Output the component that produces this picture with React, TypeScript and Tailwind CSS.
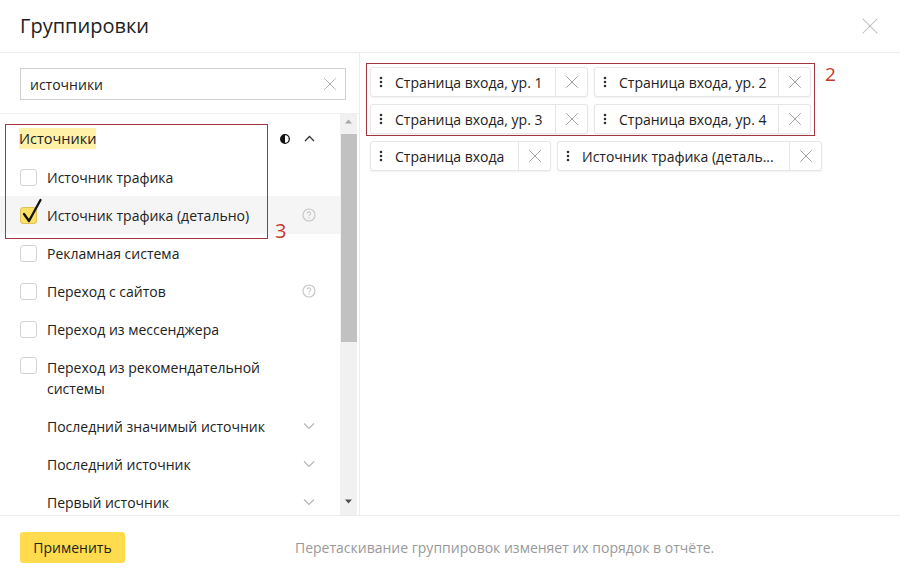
import { X } from "lucide-react";

type Row =
  | { kind: "check"; label: string; checked?: boolean; hint?: boolean; hover?: boolean; twoLine?: boolean }
  | { kind: "sub"; label: string };

const rows: Row[] = [
  { kind: "check", label: "Источник трафика" },
  { kind: "check", label: "Источник трафика (детально)", checked: true, hint: true, hover: true },
  { kind: "check", label: "Рекламная система" },
  { kind: "check", label: "Переход с сайтов", hint: true },
  { kind: "check", label: "Переход из мессенджера" },
  { kind: "check", label: "Переход из рекомендательной системы", twoLine: true },
  { kind: "sub", label: "Последний значимый источник" },
  { kind: "sub", label: "Последний источник" },
  { kind: "sub", label: "Первый источник" },
];

const chips = [
  { label: "Страница входа, ур. 1", w: "w-[218px]" },
  { label: "Страница входа, ур. 2", w: "w-[217px]" },
  { label: "Страница входа, ур. 3", w: "w-[218px]" },
  { label: "Страница входа, ур. 4", w: "w-[217px]" },
  { label: "Страница входа", w: "w-[181px]" },
  { label: "Источник трафика (деталь...", w: "w-[265px]" },
];

function HintIcon() {
  return (
    <svg width="14" height="14" viewBox="0 0 14 14" className="text-[#c8c8c8]">
      <circle cx="7" cy="7" r="6" fill="none" stroke="currentColor" strokeWidth="1.2" />
      <path d="M5.3 5.6a1.7 1.7 0 1 1 2.4 1.5c-.5.3-.7.6-.7 1.1" fill="none" stroke="currentColor" strokeWidth="1.1" />
      <circle cx="7" cy="10" r=".7" fill="currentColor" />
    </svg>
  );
}

function ChevronDown() {
  return (
    <svg width="12" height="8" viewBox="0 0 12 8" className="text-[#b5b5b5]">
      <path d="M1 1.5l5 5 5-5" fill="none" stroke="currentColor" strokeWidth="1.2" />
    </svg>
  );
}

function DragDots() {
  return (
    <svg width="4" height="12" viewBox="0 0 4 12" className="shrink-0 text-[#333]">
      <circle cx="2" cy="2" r="1.3" fill="currentColor" />
      <circle cx="2" cy="6" r="1.3" fill="currentColor" />
      <circle cx="2" cy="10" r="1.3" fill="currentColor" />
    </svg>
  );
}

function Checkbox({ checked }: { checked?: boolean }) {
  if (!checked) return <span className="h-[17px] w-[17px] shrink-0 rounded-[3px] border border-[#d3d3d3] bg-white" />;
  return (
    <span className="relative h-[17px] w-[17px] shrink-0 rounded-[3px] border border-[#e0c25a] bg-[#ffe066]">
      <svg width="22" height="27" viewBox="0 0 22 27" className="absolute -top-[10px] left-[1px]">
        <path d="M2 16l5 7L18.5 2" fill="none" stroke="#111" strokeWidth="2.3" strokeLinecap="round" strokeLinejoin="round" />
      </svg>
    </span>
  );
}

function Chip({ label, w }: { label: string; w: string }) {
  return (
    <div className={`flex h-[30px] ${w} items-stretch rounded-[3px] border border-[#e6e6e6] bg-white shadow-[0_1px_2px_rgba(0,0,0,0.06)]`}>
      <div className="flex min-w-0 flex-1 items-center gap-[12px] pl-[8px] pr-[8px]">
        <DragDots />
        <span className="whitespace-nowrap text-[14px] text-[#222]">{label}</span>
      </div>
      <div className="flex w-[32px] items-center justify-center border-l border-[#e6e6e6]">
        <X size={22} strokeWidth={1} className="text-[#9a9a9a]" />
      </div>
    </div>
  );
}

export default function App() {
  return (
    <div className="flex h-[578px] w-[900px] flex-col overflow-hidden bg-white font-['Open_Sans',sans-serif] text-[#222]">
      <header className="flex h-[53px] shrink-0 items-center justify-between border-b border-[#ececec] pl-[20px] pr-[16px]">
        <h1 className="text-[20px] leading-none text-[#222]">Группировки</h1>
        <X size={28} strokeWidth={0.9} className="text-[#b8b8b8]" />
      </header>

      <div className="flex h-[462px] shrink-0">
        <aside className="relative flex w-[360px] shrink-0 flex-col border-r border-[#ececec]">
          <div className="h-[61px] shrink-0 border-b border-[#f0f0f0] px-[20px] pt-[15px]">
            <div className="flex h-[32px] w-[326px] items-center justify-between border border-[#d0d0d0] pl-[9px] pr-[4px]">
              <span className="text-[14px] text-[#222]">источники</span>
              <X size={22} strokeWidth={1} className="text-[#b0b0b0]" />
            </div>
          </div>

          <div className="flex min-h-0 flex-1">
            <div className="min-w-0 flex-1 overflow-hidden pt-[5px]">
              <div className="flex h-[39px] items-center justify-between pl-[19px] pr-[25px]">
                <span className="bg-[#fff1a8] text-[14.5px] leading-[21px]">Источники</span>
                <div className="flex items-center gap-[14px]">
                  <svg width="10" height="10" viewBox="0 0 10 10">
                    <circle cx="5" cy="5" r="4.3" fill="#fff" stroke="#111" strokeWidth="1.3" />
                    <path d="M5 .7a4.3 4.3 0 0 0 0 8.6z" fill="#111" />
                  </svg>
                  <svg width="11" height="7" viewBox="0 0 11 7">
                    <path d="M1 6l4.5-4.5L10 6" fill="none" stroke="#333" strokeWidth="1.3" />
                  </svg>
                </div>
              </div>
              {rows.map((r) =>
                r.kind === "check" ? (
                  <div
                    key={r.label}
                    className={`flex ${r.twoLine ? "items-start pb-[8px] pt-[9px]" : "h-[38px] items-center"} ${r.hover ? "bg-[#f5f5f5]" : ""} pl-[20px] pr-[24px]`}
                  >
                    <Checkbox checked={r.checked} />
                    <span className={`ml-[10px] flex-1 text-[14px] leading-[21px] ${r.twoLine ? "max-w-[220px]" : ""}`}>{r.label}</span>
                    {r.hint && <HintIcon />}
                  </div>
                ) : (
                  <div key={r.label} className="flex h-[38px] items-center justify-between pl-[47px] pr-[25px]">
                    <span className="text-[14px]">{r.label}</span>
                    <ChevronDown />
                  </div>
                ),
              )}
            </div>

            <div className="mr-[2px] flex w-[17px] shrink-0 flex-col items-center bg-[#f1f1f1] pb-[4px]">
              <svg width="9" height="20" viewBox="0 0 9 20" className="shrink-0">
                <path d="M1 9.5l3.5-4 3.5 4z" fill="#a8a8a8" />
              </svg>
              <div className="h-[208px] w-[16px] bg-[#c1c1c1]" />
              <div className="flex-1" />
              <svg width="9" height="16" viewBox="0 0 9 16" className="shrink-0">
                <path d="M1 4.5l3.5 4 3.5-4z" fill="#505050" />
              </svg>
            </div>
          </div>

          <div className="pointer-events-none absolute left-[5px] top-[71px] h-[115px] w-[263px] border border-[#a3353f]" />
          <span className="pointer-events-none absolute left-[275px] top-[168px] text-[20px] leading-none text-[#c0392b]">3</span>
        </aside>

        <section className="relative flex-1 pl-[10px] pr-[8px] pt-[14px]">
          <div className="flex flex-wrap content-start gap-x-[6px] gap-y-[7px]">
            {chips.map((c) => (
              <Chip key={c.label} label={c.label} w={c.w} />
            ))}
          </div>
          <div className="pointer-events-none absolute left-[6px] top-[10px] h-[73px] w-[449px] border border-[#a3353f]" />
          <span className="pointer-events-none absolute left-[465px] top-[12px] text-[19px] leading-none text-[#c0392b]">2</span>
        </section>
      </div>

      <footer className="flex flex-1 items-center border-t border-[#ececec] px-[20px]">
        <button className="h-[31px] w-[105px] rounded-[3px] bg-[#ffdb4d] text-[14px] text-[#222]">Применить</button>
        <span className="ml-[170px] text-[14px] text-[#999]">Перетаскивание группировок изменяет их порядок в отчёте.</span>
      </footer>
    </div>
  );
}
